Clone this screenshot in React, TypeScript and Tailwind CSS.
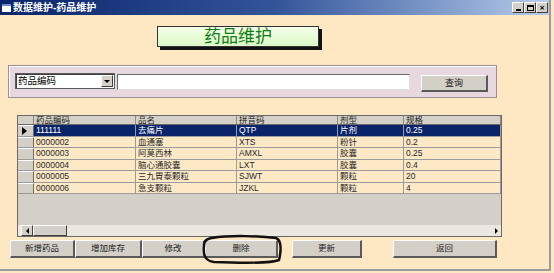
import { ReactNode } from "react";

const CJK = { fontFamily: '"Liberation Sans", "Noto Sans CJK SC", sans-serif' };

const ROWS = [
  { code: "111111", name: "去痛片", py: "QTP", form: "片剂", spec: "0.25" },
  { code: "0000002", name: "血通塞", py: "XTS", form: "粉针", spec: "0.2" },
  { code: "0000003", name: "阿莫西林", py: "AMXL", form: "胶囊", spec: "0.25" },
  { code: "0000004", name: "脑心通胶囊", py: "LXT", form: "胶囊", spec: "0.4" },
  { code: "0000005", name: "三九胃泰颗粒", py: "SJWT", form: "颗粒", spec: "20" },
  { code: "0000006", name: "急支颗粒", py: "JZKL", form: "颗粒", spec: "4" },
];

const COLS = "grid grid-cols-[16px_102px_101px_101px_66px_1fr]";

function WinBtn({ children }: { children: ReactNode }) {
  return (
    <div className="w-[12px] h-[11px] bg-[#d4d0c8] border-t border-l border-white border-r border-b border-r-[#404040] border-b-[#404040] flex items-center justify-center text-[9px] leading-none text-black font-bold">
      {children}
    </div>
  );
}

function Btn({ label, w, ml = 0 }: { label: string; w: number; ml?: number }) {
  return (
    <div
      style={{ width: w, marginLeft: ml, ...CJK }}
      className="h-[18px] bg-[#d4d0c8] border-t border-l border-t-white border-l-white border-r-2 border-b-2 border-r-[#5a5a5a] border-b-[#5a5a5a] flex items-center justify-center text-[8.5px] leading-none text-[#1a1a1a]"
    >
      {label}
    </div>
  );
}

export default function App() {
  return (
    <div className="w-[554px] h-[273px] bg-[#fee7c3] overflow-hidden relative">
      <div className="w-[551px] h-[271px] border-r-2 border-b-2 border-[#9c9c9c] flex flex-col">
        {/* title bar */}
        <div className="h-[15px] shrink-0 flex items-center pl-[2px] pr-[1px] bg-gradient-to-r from-[#0a246a] via-[#34549a] to-[#b8cdea]">
          <div className="w-[9px] h-[8px] bg-white border-t-2 border-[#6a8acc]" />
          <span className="ml-[2px] text-white font-bold text-[10px] leading-none" style={CJK}>
            数据维护-药品维护
          </span>
          <div className="ml-auto flex">
            <WinBtn>
              <span className="block w-[5px] h-[2px] bg-black mt-[4px]" />
            </WinBtn>
            <WinBtn>
              <span className="block w-[7px] h-[6px] border border-black border-t-2" />
            </WinBtn>
            <WinBtn>×</WinBtn>
          </div>
        </div>

        {/* heading */}
        <div
          className="mt-[11px] ml-[157px] w-[162px] h-[21px] shrink-0 border border-[#333] bg-gradient-to-b from-[#f4ffe8] to-[#dcf8c8] shadow-[3px_3px_0_#111] flex items-center justify-center text-[17px] leading-none text-[#0d7d14]"
          style={CJK}
        >
          药品维护
        </div>

        {/* search panel */}
        <div className="mt-[18px] ml-[8px] w-[489px] h-[33px] shrink-0 bg-[#e7d7df] border border-[#9c9098] shadow-[inset_1px_1px_0_#ffffff] flex items-start pl-[6px] pt-[7px]">
          <div className="w-[100px] h-[16px] bg-white border border-[#5a5a5a] shadow-[inset_1px_1px_0_#404040] flex items-center" style={CJK}>
            <span className="pl-[2px] text-[9.5px] leading-none text-black flex-1">药品编码</span>
            <div className="w-[12px] h-[12px] mr-[1px] bg-[#d4d0c8] border-t border-l border-white border-r border-b border-r-[#404040] border-b-[#404040] flex items-center justify-center">
              <span className="block w-0 h-0 border-l-[3px] border-r-[3px] border-t-[3px] border-l-transparent border-r-transparent border-t-black" />
            </div>
          </div>
          <div className="ml-[2px] mt-[1px] w-[293px] h-[16px] bg-white border-t border-l border-[#6a6a6a] border-r border-b border-r-[#e0e0e0] border-b-[#e0e0e0]" />
          <div
            className="ml-[11px] mt-[2px] w-[67px] h-[17px] bg-[#d4d0c8] border-t border-l border-white border-r-2 border-b-2 border-r-[#5a5a5a] border-b-[#5a5a5a] flex items-center justify-center text-[9px] leading-none text-[#1a1a1a]"
            style={CJK}
          >
            查询
          </div>
        </div>

        {/* data grid */}
        <div className="mt-[17px] ml-[17px] w-[485px] h-[122px] shrink-0 border border-[#6a6a6a] bg-[#d4d0c8] flex flex-col text-[8.5px] leading-none" style={CJK}>
          <div className={`${COLS} h-[9px] bg-[#d4d0c8] border-b border-[#6a6a6a] text-[#222]`}>
            <div className="border-r border-[#8a8a8a]" />
            {["药品编码", "品名", "拼音码", "剂型", "规格"].map((h) => (
              <div key={h} className="pl-[2px] border-r border-[#8a8a8a] overflow-hidden leading-[8px]">
                {h}
              </div>
            ))}
          </div>
          {ROWS.map((r, i) => {
            const sel = i === 0;
            return (
              <div
                key={r.code}
                className={`${COLS} h-[11.5px] border-b border-[#9a9a9a] ${sel ? "bg-[#0a246a] text-white" : "bg-[#fde9c6] text-[#2a2a2a]"}`}
              >
                <div className="bg-[#d4d0c8] border-t border-white border-r border-r-[#6a6a6a] flex items-center pl-[4px]">
                  {sel && (
                    <span className="block w-0 h-0 border-t-[4px] border-b-[4px] border-l-[5px] border-t-transparent border-b-transparent border-l-black" />
                  )}
                </div>
                {[r.code, r.name, r.py, r.form, r.spec].map((v, j) => (
                  <div key={j} className="pl-[2px] border-r border-[#9a9a9a] flex items-center overflow-hidden whitespace-nowrap leading-[10px]">
                    {v}
                  </div>
                ))}
              </div>
            );
          })}
          <div className="flex-1" />
          {/* horizontal scrollbar */}
          <div className="h-[11px] shrink-0 bg-[#ece8e0] flex items-stretch pl-[3px]">
            <div className="w-[12px] bg-[#d4d0c8] border-t border-l border-white border-r border-b border-r-[#404040] border-b-[#404040] flex items-center justify-center">
              <span className="block w-0 h-0 border-t-[3px] border-b-[3px] border-r-[3px] border-t-transparent border-b-transparent border-r-black" />
            </div>
            <div className="w-[34px] bg-[#d4d0c8] border-t border-l border-white border-r border-b border-r-[#404040] border-b-[#404040]" />
            <div className="flex-1" />
            <div className="w-[10px] flex items-center justify-center">
              <span className="block w-0 h-0 border-t-[3px] border-b-[3px] border-l-[3px] border-t-transparent border-b-transparent border-l-black" />
            </div>
          </div>
        </div>

        {/* buttons */}
        <div className="mt-[3px] ml-[10px] flex items-start">
          <Btn label="新增药品" w={65} />
          <Btn label="增加库存" w={67} />
          <Btn label="修改" w={63} />
          <Btn label="删除" w={73} />
          <Btn label="更新" w={70} ml={14} />
          <Btn label="返回" w={104} ml={31} />
        </div>
      </div>

      {/* hand-drawn circle around 删除 */}
      <svg className="absolute left-0 top-0 pointer-events-none" width="554" height="273">
        <path
          d="M212 238 C230 235 260 236 276 238 C282 240 281 252 279 260 C270 264 240 263 214 262 C205 261 203 255 204 246 C204 240 207 238 218 237"
          fill="none"
          stroke="#111"
          strokeWidth="2.5"
          strokeLinecap="round"
        />
      </svg>
    </div>
  );
}
